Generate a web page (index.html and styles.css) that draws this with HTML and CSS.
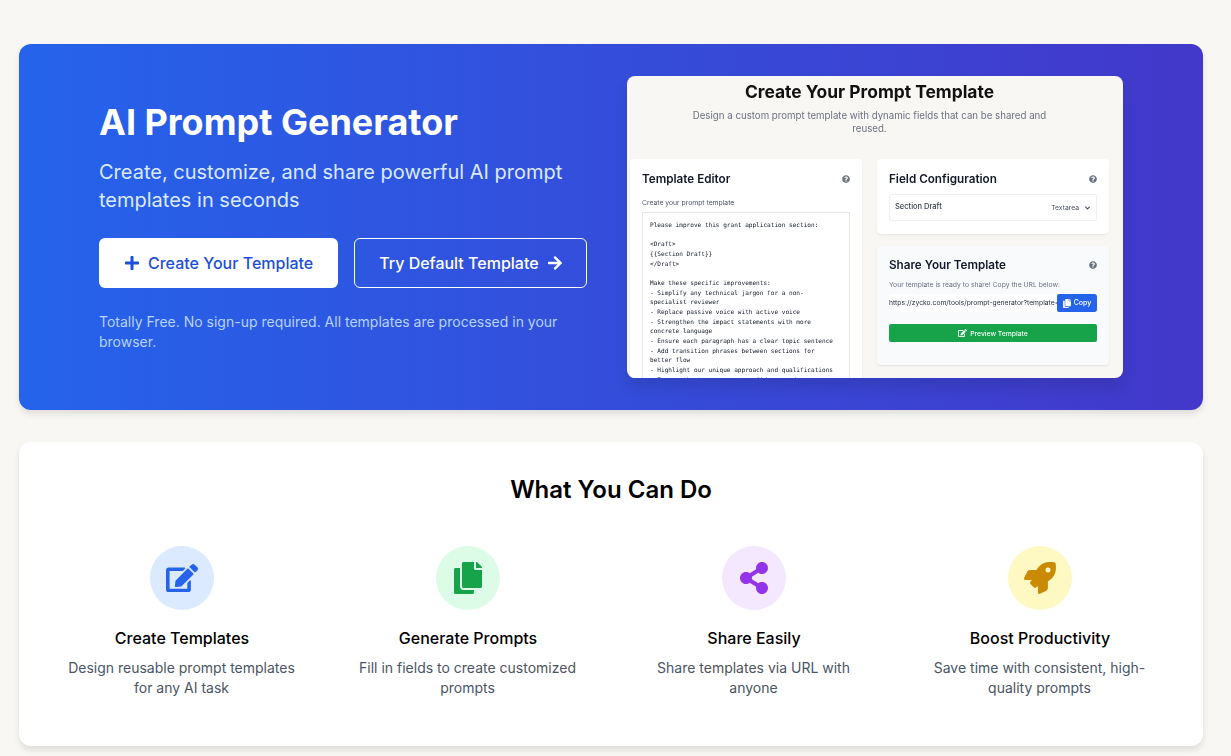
FILE: index.html
```html
<!DOCTYPE html>
<html lang="en">
<head>
    <meta charset="UTF-8">
    <meta name="viewport" content="width=device-width, initial-scale=1.0">
    <title>AI Prompt Generator</title>
    <link rel="stylesheet" href="styles.css">
</head>
<body>
    <svg class="icon-defs" xmlns="http://www.w3.org/2000/svg">
        <symbol id="i-edit" viewBox="0 0 576 512"><path d="M402.6 83.2l90.2 90.2c3.8 3.8 3.8 10 0 13.8L274.4 405.6l-92.8 10.3c-12.4 1.4-22.9-9.1-21.5-21.5l10.3-92.8L388.8 83.2c3.8-3.8 10-3.8 13.8 0zm162-22.9l-48.8-48.8c-15.2-15.2-39.9-15.2-55.2 0l-35.4 35.4c-3.8 3.8-3.8 10 0 13.8l90.2 90.2c3.8 3.8 10 3.8 13.8 0l35.4-35.4c15.2-15.3 15.2-40 0-55.2zM384 346.2V448H64V128h229.8c3.2 0 6.2-1.3 8.5-3.5l40-40c7.6-7.6 2.2-20.5-8.5-20.5H48C21.5 64 0 85.5 0 112v352c0 26.5 21.5 48 48 48h352c26.5 0 48-21.5 48-48V306.2c0-10.7-12.9-16-20.5-8.5l-40 40c-2.2 2.3-3.5 5.3-3.5 8.5z"/></symbol>
        <symbol id="i-copy" viewBox="0 0 448 512"><path d="M320 448v40c0 13.255-10.745 24-24 24H24c-13.255 0-24-10.745-24-24V120c0-13.255 10.745-24 24-24h72v296c0 30.879 25.121 56 56 56h168zm0-344V0H152c-13.255 0-24 10.745-24 24v368c0 13.255 10.745 24 24 24h272c13.255 0 24-10.745 24-24V128H344c-13.2 0-24-10.8-24-24zm120.971-31.029L375.029 7.029A24 24 0 0 0 358.059 0H352v96h96v-6.059a24 24 0 0 0-7.029-16.97z"/></symbol>
        <symbol id="i-share" viewBox="0 0 448 512"><path d="M352 320c-22.608 0-43.387 7.819-59.79 20.895l-102.486-64.054a96.551 96.551 0 0 0 0-41.683l102.486-64.054C308.613 184.181 329.392 192 352 192c53.019 0 96-42.981 96-96S405.019 0 352 0s-96 42.981-96 96c0 7.158.79 14.13 2.276 20.841L155.79 180.895C139.387 167.819 118.608 160 96 160c-53.019 0-96 42.981-96 96s42.981 96 96 96c22.608 0 43.387-7.819 59.79-20.895l102.486 64.054A96.301 96.301 0 0 0 256 416c0 53.019 42.981 96 96 96s96-42.981 96-96-42.981-96-96-96z"/></symbol>
        <symbol id="i-rocket" viewBox="0 0 512 512"><path fill-rule="evenodd" d="M505.1 19.1c-1.2-5.5-6.7-11-12.2-12.2C460.7 0 435.5 0 410.4 0 307.2 0 245.3 55.2 199.1 128H94.8c-16.3 0-35.6 11.9-42.9 26.5L2.5 253.3A28.4 28.4 0 0 0 0 264a24 24 0 0 0 24 24h103.8l-22.5 22.5c-11.3 11.3-12.7 31.3 0 43.9l50.6 50.6c11.3 11.3 31.3 12.7 43.9 0l22.5-22.5V486.4a24 24 0 0 0 24 23.6 28.4 28.4 0 0 0 10.7-2.5l98.8-49.4c14.6-7.3 26.5-26.5 26.5-42.9V311.4c72.6-46.4 128-108.3 128-211C512 75.2 512 50 505.1 19.1zM384 168a40 40 0 1 1 0-80 40 40 0 0 1 0 80z"/></symbol>
        <symbol id="i-plus" viewBox="0 0 448 512"><path d="M416 208H272V64c0-17.67-14.33-32-32-32h-32c-17.67 0-32 14.33-32 32v144H32c-17.67 0-32 14.33-32 32v32c0 17.67 14.33 32 32 32h144v144c0 17.67 14.33 32 32 32h32c17.67 0 32-14.33 32-32V304h144c17.67 0 32-14.33 32-32v-32c0-17.67-14.33-32-32-32z"/></symbol>
        <symbol id="i-arrow" viewBox="0 0 448 512"><path d="M190.5 66.9l22.2-22.2c9.4-9.4 24.6-9.4 33.9 0L441 239c9.4 9.4 9.4 24.6 0 33.9L246.6 467.3c-9.4 9.4-24.6 9.4-33.9 0l-22.2-22.2c-9.5-9.5-9.3-25 .4-34.3L311.4 296H24c-13.3 0-24-10.7-24-24v-32c0-13.3 10.7-24 24-24h287.4L190.9 101.2c-9.8-9.3-10-24.8-.4-34.3z"/></symbol>
        <symbol id="i-help" viewBox="0 0 512 512"><path d="M504 256c0 136.997-111.043 248-248 248S8 392.997 8 256C8 119.083 119.043 8 256 8s248 111.083 248 248zM262.655 90c-54.497 0-89.255 22.957-116.549 63.758-3.536 5.286-2.353 12.415 2.715 16.258l34.699 26.31c5.205 3.947 12.621 3.008 16.665-2.122 17.864-22.658 30.113-35.797 57.303-35.797 20.429 0 45.698 13.148 45.698 32.958 0 14.976-12.363 22.667-32.534 33.976C247.128 238.528 216 254.941 216 296v4c0 6.627 5.373 12 12 12h56c6.627 0 12-5.373 12-12v-1.333c0-28.462 83.186-29.647 83.186-106.667 0-58.002-60.165-102-116.531-102zM256 338c-25.365 0-46 20.635-46 46 0 25.364 20.635 46 46 46s46-20.636 46-46c0-25.365-20.635-46-46-46z"/></symbol>
        <symbol id="i-chevron" viewBox="0 0 448 512"><path d="M207.029 381.476L12.686 187.132c-9.373-9.373-9.373-24.569 0-33.941l22.667-22.667c9.357-9.357 24.522-9.375 33.901-.04L224 284.505l154.745-154.021c9.379-9.335 24.544-9.317 33.901.04l22.667 22.667c9.373 9.373 9.373 24.569 0 33.941L240.971 381.476c-9.373 9.372-24.569 9.372-33.942 0z"/></symbol>
    </svg>

    <section class="hero">
        <div class="hero-text">
            <h1>AI Prompt Generator</h1>
            <p class="hero-sub">Create, customize, and share powerful AI prompt templates in seconds</p>
            <div class="hero-buttons">
                <a class="btn btn-white" href="#"><svg class="btn-plus"><use href="#i-plus"/></svg>Create Your Template</a>
                <a class="btn btn-outline" href="#">Try Default Template<svg class="btn-arrow"><use href="#i-arrow"/></svg></a>
            </div>
            <p class="hero-note">Totally Free. No sign-up required. All templates are processed in your browser.</p>
        </div>

        <div class="shot">
            <h2 class="shot-title">Create Your Prompt Template</h2>
            <p class="shot-sub">Design a custom prompt template with dynamic fields that can be shared and reused.</p>
            <div class="shot-grid">
                <div class="mini-card editor-card">
                    <div class="mini-head"><h3>Template Editor</h3><svg class="help"><use href="#i-help"/></svg></div>
                    <div class="mini-label">Create your prompt template</div>
                    <div class="mini-textarea">Please improve this grant application section:

&lt;Draft&gt;
{{Section Draft}}
&lt;/Draft&gt;

Make these specific improvements:
- Simplify any technical jargon for a non-specialist reviewer
- Replace passive voice with active voice
- Strengthen the impact statements with more concrete language
- Ensure each paragraph has a clear topic sentence
- Add transition phrases between sections for better flow
- Highlight our unique approach and qualifications
- Ensure the tone conveys confidence and</div>
                </div>
                <div class="shot-side">
                    <div class="mini-card field-card">
                        <div class="mini-head"><h3>Field Configuration</h3><svg class="help"><use href="#i-help"/></svg></div>
                        <div class="field-row">
                            <span class="field-name">Section Draft</span>
                            <span class="field-type">Textarea<svg class="chevron"><use href="#i-chevron"/></svg></span>
                        </div>
                    </div>
                    <div class="mini-card share-card">
                        <div class="mini-head"><h3>Share Your Template</h3><svg class="help"><use href="#i-help"/></svg></div>
                        <div class="share-hint">Your template is ready to share! Copy the URL below:</div>
                        <div class="share-url">
                            <span class="url-text">https://zycko.com/tools/prompt-generator?template=</span>
                            <span class="copy-btn"><svg class="copy-icon"><use href="#i-copy"/></svg>Copy</span>
                        </div>
                        <div class="preview-btn"><svg class="preview-icon"><use href="#i-edit"/></svg>Preview Template</div>
                    </div>
                </div>
            </div>
        </div>
    </section>

    <section class="features">
        <h2>What You Can Do</h2>
        <div class="feature-grid">
            <div class="feature">
                <div class="feature-icon bg-blue"><svg class="icon-edit"><use href="#i-edit"/></svg></div>
                <h3>Create Templates</h3>
                <p>Design reusable prompt templates for any AI task</p>
            </div>
            <div class="feature">
                <div class="feature-icon bg-green"><svg class="icon-tall"><use href="#i-copy"/></svg></div>
                <h3>Generate Prompts</h3>
                <p>Fill in fields to create customized prompts</p>
            </div>
            <div class="feature">
                <div class="feature-icon bg-purple"><svg class="icon-tall"><use href="#i-share"/></svg></div>
                <h3>Share Easily</h3>
                <p>Share templates via URL with anyone</p>
            </div>
            <div class="feature">
                <div class="feature-icon bg-yellow"><svg class="icon-rocket"><use href="#i-rocket"/></svg></div>
                <h3>Boost Productivity</h3>
                <p>Save time with consistent, high-quality prompts</p>
            </div>
        </div>
    </section>
</body>
</html>
```

FILE: styles.css
```css
* {
    box-sizing: border-box;
}
body {
    margin: 0;
    padding: 44px 28px 10px 19px;
    font-family: Inter, "Liberation Sans", sans-serif;
    background-color: #f9f7f4;
    color: #000;
}
svg {
    fill: currentColor;
}
.icon-defs {
    display: none;
}
h1, h2, h3, p {
    margin: 0;
}

/* hero */
.hero {
    display: grid;
    grid-template-columns: 1fr 1fr;
    gap: 32px;
    align-items: center;
    padding: 32px 80px;
    border-radius: 12px;
    background: linear-gradient(to right, #2563eb, #4338ca);
    box-shadow: 0 4px 6px rgba(0, 0, 0, 0.1);
}
.hero h1 {
    font-size: 36px;
    line-height: 40px;
    font-weight: 700;
    color: #fff;
    margin-bottom: 16px;
}
.hero-sub {
    font-size: 20px;
    line-height: 28px;
    color: #dbeafe;
    margin-bottom: 24px;
}
.hero-buttons {
    display: flex;
    gap: 16px;
    margin-bottom: 24px;
}
.btn {
    display: flex;
    align-items: center;
    height: 50px;
    padding: 0 24px;
    border-radius: 6px;
    font-size: 16px;
    text-decoration: none;
}
.btn-white {
    padding: 0 25px 0 26px;
    background-color: #fff;
    color: #1d4ed8;
    font-weight: 500;
}
.btn-outline {
    width: 233px;
    border: 1px solid #fff;
    color: #fff;
    font-weight: 500;
}
.btn-plus {
    width: 14px;
    height: 16px;
    margin-right: 9px;
}
.btn-arrow {
    width: 14px;
    height: 16px;
    margin-left: 9px;
}
.hero-note {
    font-size: 14px;
    line-height: 20px;
    color: #b6d3fd;
}

/* preview picture of the editor */
.shot {
    height: 302px;
    overflow: hidden;
    padding: 5px 14px 0 3px;
    border-radius: 8px;
    background-color: #f9f7f4;
    box-shadow: 0 10px 15px rgba(0, 0, 0, 0.1);
    filter: blur(0.4px);
}
.shot-title {
    font-size: 17.4px;
    line-height: 21px;
    font-weight: 700;
    color: #111;
    text-align: center;
    margin-bottom: 7px;
}
.shot-sub {
    width: 370px;
    margin: 0 auto 24px;
    font-size: 9.7px;
    line-height: 13px;
    color: #6b7280;
    text-align: center;
}
.shot-grid {
    display: grid;
    grid-template-columns: 232px 232px;
    gap: 15px;
}
.shot-side {
    display: flex;
    flex-direction: column;
    gap: 12px;
}
.mini-card {
    padding: 12px;
    border-radius: 4px;
    background-color: #fff;
    box-shadow: 0 1px 2px rgba(0, 0, 0, 0.08);
}
.mini-head {
    display: flex;
    justify-content: space-between;
    align-items: center;
    height: 14px;
}
.mini-head h3 {
    font-size: 11.7px;
    font-weight: 600;
    color: #111827;
}
.help {
    width: 8px;
    height: 8px;
    color: #6b7280;
}
.editor-card {
    height: 240px;
    padding-top: 13px;
}
.mini-label {
    margin-top: 12px;
    font-size: 6.8px;
    line-height: 10px;
    color: #4b5563;
}
.mini-textarea {
    height: 200px;
    margin-top: 4px;
    padding: 7px 12px 7px 7px;
    border: 1px solid #e5e7eb;
    font-family: "DejaVu Sans Mono", monospace;
    font-size: 6.08px;
    line-height: 9.67px;
    color: #111827;
    white-space: pre-wrap;
}
.field-card {
    height: 75px;
    padding-top: 13px;
}
.field-row {
    display: flex;
    justify-content: space-between;
    align-items: flex-start;
    height: 27px;
    margin-top: 8px;
    padding: 7px 6px 7px 5px;
    border: 1px solid #f0f0f0;
    border-radius: 2px;
    font-size: 7.5px;
    line-height: 9px;
}
.field-name {
    font-weight: 500;
    color: #374151;
}
.field-type {
    display: flex;
    align-items: center;
    margin-top: 1px;
    color: #4b5563;
    font-size: 6.8px;
}
.chevron {
    width: 5px;
    height: 6px;
    margin-left: 6px;
    color: #374151;
}
.share-card {
    height: 119px;
    background-color: #f8fafc;
}
.share-hint {
    margin-top: 8px;
    font-size: 6.8px;
    line-height: 10px;
    color: #6b7280;
}
.share-url {
    display: flex;
    height: 18px;
    margin-top: 4px;
    background-color: #fff;
    border-radius: 2px;
    overflow: hidden;
    font-size: 6.75px;
    line-height: 18px;
}
.url-text {
    flex: 1;
    overflow: hidden;
    white-space: nowrap;
    color: #1f2937;
}
.copy-btn {
    display: flex;
    flex: none;
    align-items: center;
    justify-content: center;
    width: 40px;
    border-radius: 2px;
    background-color: #2563eb;
    color: #fff;
    font-size: 7px;
    font-weight: 500;
}
.copy-icon {
    width: 8px;
    height: 9px;
    margin-right: 3px;
}
.preview-btn {
    display: flex;
    align-items: center;
    justify-content: center;
    height: 18px;
    margin-top: 12px;
    border-radius: 2px;
    background-color: #16a34a;
    color: #f0fdf4;
    font-size: 6.8px;
    font-weight: 500;
}
.preview-icon {
    width: 9px;
    height: 8px;
    margin-right: 3px;
}

/* features */
.features {
    margin-top: 32px;
    height: 304px;
    padding: 32px 36px 0;
    border-radius: 12px;
    background-color: #fff;
    box-shadow: 0 4px 6px rgba(0, 0, 0, 0.1);
}
.features h2 {
    font-size: 24px;
    line-height: 32px;
    font-weight: 600;
    text-align: center;
    margin-bottom: 24px;
}
.feature-grid {
    display: grid;
    grid-template-columns: repeat(4, 1fr);
    gap: 32px;
}
.feature {
    padding: 16px 8px 0;
    text-align: center;
}
.feature-icon {
    display: flex;
    align-items: center;
    justify-content: center;
    width: 64px;
    height: 64px;
    margin: 0 auto 16px;
    border-radius: 50%;
}
.feature h3 {
    font-size: 16px;
    line-height: 24px;
    font-weight: 500;
    margin-bottom: 8px;
}
.feature p {
    margin-right: 1px;
    font-size: 14px;
    line-height: 20px;
    color: #4b5563;
}
.icon-edit {
    width: 32px;
    height: 28.4px;
}
.icon-tall {
    width: 28px;
    height: 32px;
}
.icon-rocket {
    width: 32px;
    height: 32px;
}
.bg-blue {
    background-color: #dbeafe;
    color: #2563eb;
}
.bg-green {
    background-color: #dcfce7;
    color: #16a34a;
}
.bg-purple {
    background-color: #f3e8ff;
    color: #9333ea;
}
.bg-yellow {
    background-color: #fef9c3;
    color: #ca8a04;
}
```
